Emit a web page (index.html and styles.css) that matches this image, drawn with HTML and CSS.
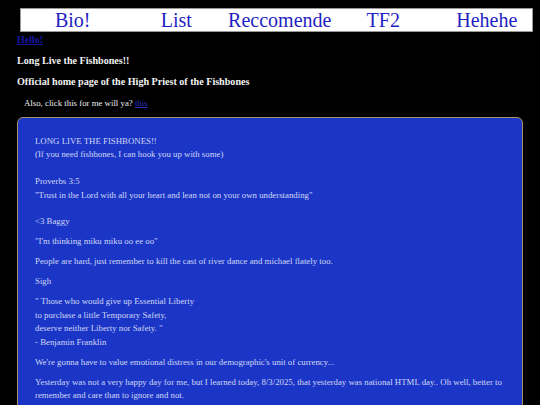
FILE: index.html
```html
<!DOCTYPE html>
<html>
<head>
<meta charset="utf-8">
<link rel="stylesheet" href="styles.css">
</head>
<body>
<nav class="nav">
  <div class="cell"><a>Bio!</a></div>
  <div class="cell"><a>List</a></div>
  <div class="cell"><a>Reccomende</a></div>
  <div class="cell"><a>TF2</a></div>
  <div class="cell"><a>Hehehe</a></div>
</nav>
<div class="hello"><a href="#">Hello!</a></div>
<h3 class="h first">Long Live the Fishbones!!</h3>
<h3 class="h second">Official home page of the High Priest of the Fishbones</h3>
<p class="also">Also, click this for me will ya? <a href="#">this</a></p>
<div class="box">
  <p>LONG LIVE THE FISHBONES!!<br>(If you need fishbones, I can hook you up with some)<br><br>Proverbs 3:5<br>"Trust in the Lord with all your heart and lean not on your own understanding"<br><br>&lt;3 Baggy</p>
  <p>"I'm thinking miku miku oo ee oo"</p>
  <p>People are hard, just remember to kill the cast of river dance and michael flately too.</p>
  <p>Sigh</p>
  <p>" Those who would give up Essential Liberty<br>to purchase a little Temporary Safety,<br>deserve neither Liberty nor Safety. "<br>- Benjamin Franklin</p>
  <p>We're gonna have to value emotional distress in our demographic's unit of currency...</p>
  <p>Yesterday was not a very happy day for me, but I learned today, 8/3/2025, that yesterday was national HTML day.. Oh well, better to remember and care than to ignore and not.</p>
</div>
</body>
</html>
```
FILE: styles.css
```css
html, body {
  background: #000;
}
body {
  margin: 0;
  padding: 8px 0 0 0;
  font-family: "Liberation Serif", "Times New Roman", serif;
  color: #fff;
}
.nav {
  margin: 0 0 0 20px;
  width: 511px;
  background: #fff;
  border: 1px solid #9a9a9a;
  display: grid;
  grid-template-columns: repeat(5, 103.5px);
}
.cell {
  white-space: nowrap;
  text-align: center;
  font-size: 20px;
  line-height: 22px;
}
.cell a {
  color: #1f1fc4;
}
.hello {
  margin: 2px 0 0 17px;
  font-size: 10px;
  line-height: 12px;
  font-weight: bold;
}
.hello a {
  color: #1717a6;
}
.h {
  margin: 0 0 0 17px;
  font-size: 10.1px;
  line-height: 12px;
  font-weight: bold;
  color: #f2f2f2;
}
.first {
  margin-top: 8.5px;
}
.second {
  margin-top: 9px;
}
.also {
  margin: 9.5px 0 0 24px;
  font-size: 8.8px;
  line-height: 12px;
  color: #ececec;
}
.also a {
  color: #2b2bc0;
}
.box {
  margin: 8px 0 0 17px;
  width: 470px;
  padding: 17px 17px 12px 17px;
  background: #1b36c7;
  border: 1px solid #a8925e;
  border-radius: 6px;
  color: #d0d7f4;
  font-size: 8.8px;
  line-height: 13.4px;
}
.box p {
  margin: 0 0 6.6px 0;
}
```
